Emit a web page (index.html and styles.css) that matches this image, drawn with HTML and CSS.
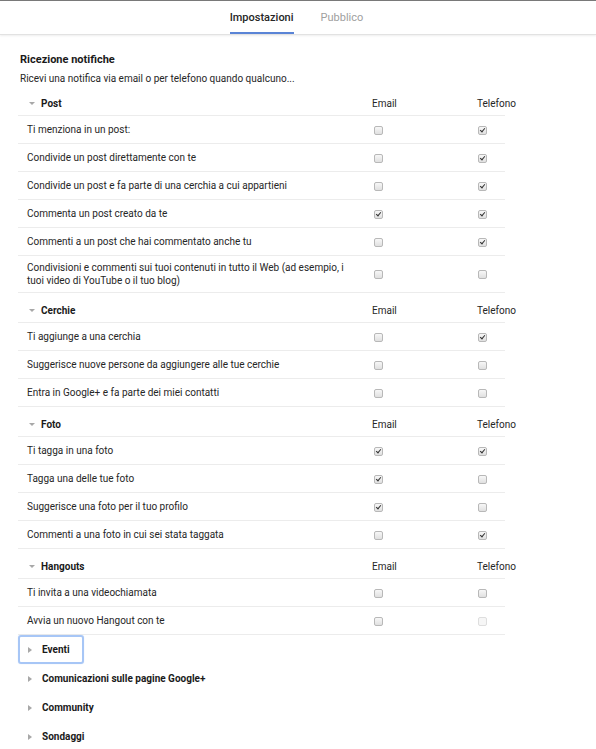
FILE: index.html
```html
<!DOCTYPE html>
<html lang="it">
<head>
<meta charset="utf-8">
<title>Impostazioni</title>
<link rel="stylesheet" href="styles.css">
</head>
<body>
<div class="topline"></div>
<nav class="tabs">
  <div class="tab active">Impostazioni</div>
  <div class="tab">Pubblico</div>
</nav>
<main class="content">
  <h2 class="title">Ricezione notifiche</h2>
  <p class="subtitle">Ricevi una notifica via email o per telefono quando qualcuno...</p>

  <div class="table">
    <div class="row head"><div class="label"><span class="arrow-down"></span>Post</div><div class="col">Email</div><div class="col">Telefono</div></div>
    <div class="row"><div class="label">Ti menziona in un post:</div><div class="col"><span class="cb e"></span></div><div class="col"><span class="cb p on"></span></div></div>
    <div class="row"><div class="label">Condivide un post direttamente con te</div><div class="col"><span class="cb e"></span></div><div class="col"><span class="cb p on"></span></div></div>
    <div class="row"><div class="label">Condivide un post e fa parte di una cerchia a cui appartieni</div><div class="col"><span class="cb e"></span></div><div class="col"><span class="cb p on"></span></div></div>
    <div class="row"><div class="label">Commenta un post creato da te</div><div class="col"><span class="cb e on"></span></div><div class="col"><span class="cb p on"></span></div></div>
    <div class="row"><div class="label">Commenti a un post che hai commentato anche tu</div><div class="col"><span class="cb e"></span></div><div class="col"><span class="cb p on"></span></div></div>
    <div class="row two"><div class="label">Condivisioni e commenti sui tuoi contenuti in tutto il Web (ad esempio, i tuoi video di YouTube o il tuo blog)</div><div class="col"><span class="cb e"></span></div><div class="col"><span class="cb p"></span></div></div>

    <div class="row head"><div class="label"><span class="arrow-down"></span>Cerchie</div><div class="col">Email</div><div class="col">Telefono</div></div>
    <div class="row"><div class="label">Ti aggiunge a una cerchia</div><div class="col"><span class="cb e"></span></div><div class="col"><span class="cb p on"></span></div></div>
    <div class="row"><div class="label">Suggerisce nuove persone da aggiungere alle tue cerchie</div><div class="col"><span class="cb e"></span></div><div class="col"><span class="cb p"></span></div></div>
    <div class="row"><div class="label">Entra in Google+ e fa parte dei miei contatti</div><div class="col"><span class="cb e"></span></div><div class="col"><span class="cb p"></span></div></div>

    <div class="row head"><div class="label"><span class="arrow-down"></span>Foto</div><div class="col">Email</div><div class="col">Telefono</div></div>
    <div class="row"><div class="label">Ti tagga in una foto</div><div class="col"><span class="cb e on"></span></div><div class="col"><span class="cb p on"></span></div></div>
    <div class="row"><div class="label">Tagga una delle tue foto</div><div class="col"><span class="cb e on"></span></div><div class="col"><span class="cb p"></span></div></div>
    <div class="row"><div class="label">Suggerisce una foto per il tuo profilo</div><div class="col"><span class="cb e on"></span></div><div class="col"><span class="cb p"></span></div></div>
    <div class="row"><div class="label">Commenti a una foto in cui sei stata taggata</div><div class="col"><span class="cb e"></span></div><div class="col"><span class="cb p on"></span></div></div>

    <div class="row head"><div class="label"><span class="arrow-down"></span>Hangouts</div><div class="col">Email</div><div class="col">Telefono</div></div>
    <div class="row"><div class="label">Ti invita a una videochiamata</div><div class="col"><span class="cb e"></span></div><div class="col"><span class="cb p"></span></div></div>
    <div class="row"><div class="label">Avvia un nuovo Hangout con te</div><div class="col"><span class="cb e"></span></div><div class="col"><span class="cb p disabled"></span></div></div>
  </div>

  <div class="collapsed">
    <div class="chead focus"><span class="arrow-right"></span>Eventi</div>
    <div class="chead"><span class="arrow-right"></span>Comunicazioni sulle pagine Google+</div>
    <div class="chead"><span class="arrow-right"></span>Community</div>
    <div class="chead"><span class="arrow-right"></span>Sondaggi</div>
  </div>
</main>
</body>
</html>
```
FILE: styles.css
```css
html, body {
  margin: 0;
  padding: 0;
  background: #fff;
}
body {
  font-family: Roboto, "Liberation Sans", Arial, sans-serif;
  color: #212121;
  overflow: hidden;
}
.topline {
  height: 1px;
  background: #7a7a7a;
}
.tabs {
  height: 34px;
  box-sizing: border-box;
  display: flex;
  justify-content: center;
  gap: 27px;
  padding-right: 3px;
  border-bottom: 1px solid #e2e2e2;
  box-shadow: 0 1px 2px rgba(0, 0, 0, 0.07);
}
.tab {
  height: 33px;
  box-sizing: border-box;
  padding-top: 2px;
  display: flex;
  align-items: center;
  font-size: 11px;
  color: #a0a0a0;
  border-bottom: 2px solid transparent;
}
.tab.active {
  color: #262626;
  font-weight: 500;
  border-bottom-color: #5a84d6;
}
.content {
  padding: 0 0 0 18px;
}
.title {
  margin: 18px 0 0 2px;
  font-size: 11px;
  line-height: 14px;
  font-weight: 700;
  color: #1a1a1a;
}
.subtitle {
  margin: 5px 0 0 2px;
  font-size: 10px;
  line-height: 13px;
  color: #262626;
}
.table {
  width: 487px;
  margin-top: 1px;
}
.row {
  display: grid;
  grid-template-columns: 345px 105px 28px;
  align-items: center;
  height: 28px;
  box-sizing: border-box;
  padding-left: 9px;
  border-bottom: 1px solid #ececec;
  font-size: 10px;
  color: #262626;
}
.row.two {
  height: 37px;
}
.row.head {
  height: 30px;
  padding-top: 5px;
  font-weight: 700;
  color: #1a1a1a;
}
.row.head .col {
  font-weight: 400;
  color: #262626;
  white-space: nowrap;
}
.label {
  padding-right: 22px;
  line-height: 13px;
  display: flex;
  align-items: center;
}
.col {
  display: flex;
  align-items: center;
}
.arrow-down {
  width: 0;
  height: 0;
  margin: 1px 6px 0 2px;
  border-left: 3.5px solid transparent;
  border-right: 3.5px solid transparent;
  border-top: 3.5px solid #a8a8a8;
}
.cb {
  position: relative;
  display: block;
  width: 7px;
  height: 7px;
  border: 1px solid #b8b8b8;
  border-radius: 2px;
  background: linear-gradient(#f7f7f7, #e0e0e0);
  margin-top: 1px;
}
.cb.e {
  margin-left: 2px;
}
.cb.p {
  margin-left: 1px;
}
.cb.on::after {
  content: "";
  position: absolute;
  left: 2px;
  top: 0px;
  width: 2px;
  height: 4px;
  border-right: 1.5px solid #333;
  border-bottom: 1.5px solid #333;
  transform: rotate(40deg);
}
.cb.disabled {
  border-color: #dedede;
  background: #f6f6f6;
}
.collapsed {
  display: flex;
  flex-direction: column;
  align-items: flex-start;
}
.chead {
  display: flex;
  align-items: center;
  height: 29px;
  box-sizing: border-box;
  padding: 0 12px 0 8px;
  border: 2px solid transparent;
  border-radius: 3px;
  font-size: 10px;
  font-weight: 700;
  color: #1a1a1a;
}
.chead.focus {
  border-color: #a7c6f6;
  box-shadow: 0 0 1px rgba(120, 160, 230, 0.4);
}
.arrow-right {
  width: 0;
  height: 0;
  margin-right: 10px;
  border-top: 3.5px solid transparent;
  border-bottom: 3.5px solid transparent;
  border-left: 4px solid #a8a8a8;
}
```
